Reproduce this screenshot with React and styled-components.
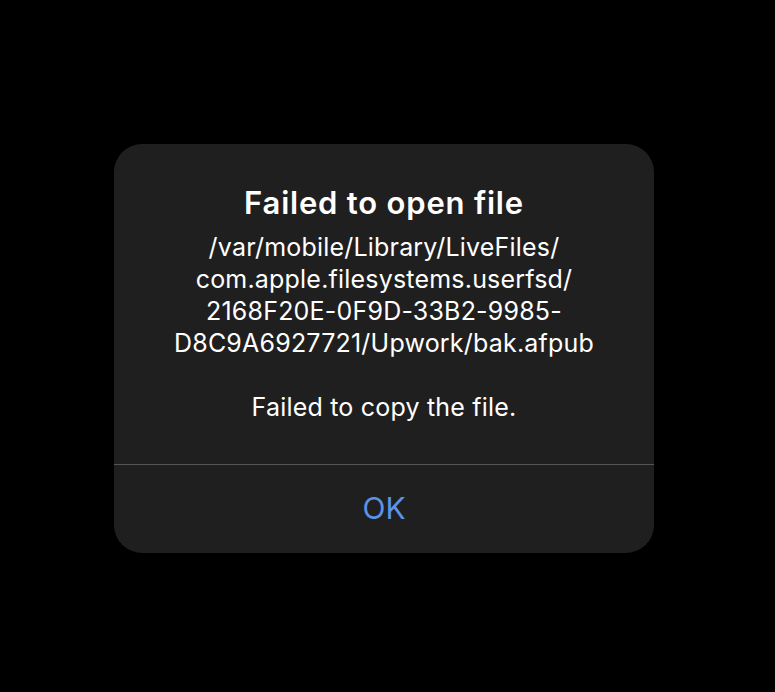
import React from "react";
import styled, { createGlobalStyle } from "styled-components";

const Global = createGlobalStyle`
  html, body { margin: 0; padding: 0; background: #000; }
  body { font-family: Inter, "Noto Sans", sans-serif; -webkit-font-smoothing: antialiased; }
`;

const Screen = styled.div`
  width: 775px;
  height: 692px;
  background: #000;
  box-sizing: border-box;
  padding: 144px 0 0 114px;
`;

const Dialog = styled.div`
  width: 540px;
  height: 409px;
  background: #1f1f1f;
  border-radius: 28px;
  display: flex;
  flex-direction: column;
  overflow: hidden;
`;

const Content = styled.div`
  height: 320px;
  box-sizing: border-box;
  padding: 40px 10px 0;
  display: flex;
  flex-direction: column;
  align-items: center;
  text-align: center;
  color: #fff;
`;

const Title = styled.div`
  font-size: 31px;
  font-weight: 600;
  line-height: 38px;
  letter-spacing: 0.8px;
`;

const Message = styled.div`
  margin-top: 9px;
  font-size: 25px;
  font-weight: 400;
  line-height: 32px;
  letter-spacing: 0.2px;
`;

const Divider = styled.div`
  height: 1px;
  background: #545456;
`;

const Button = styled.div`
  flex: 1;
  display: flex;
  align-items: center;
  justify-content: center;
  color: #5b93e8;
  font-size: 30px;
  font-weight: 400;
  padding-bottom: 3px;
`;

export default function App() {
  return (
    <>
      <Global />
      <Screen>
        <Dialog>
          <Content>
            <Title>Failed to open file</Title>
            <Message>
              /var/mobile/Library/LiveFiles/
              <br />
              com.apple.filesystems.userfsd/
              <br />
              2168F20E-0F9D-33B2-9985-
              <br />
              D8C9A6927721/Upwork/bak.afpub
              <br />
              <br />
              Failed to copy the file.
            </Message>
          </Content>
          <Divider />
          <Button>OK</Button>
        </Dialog>
      </Screen>
    </>
  );
}
